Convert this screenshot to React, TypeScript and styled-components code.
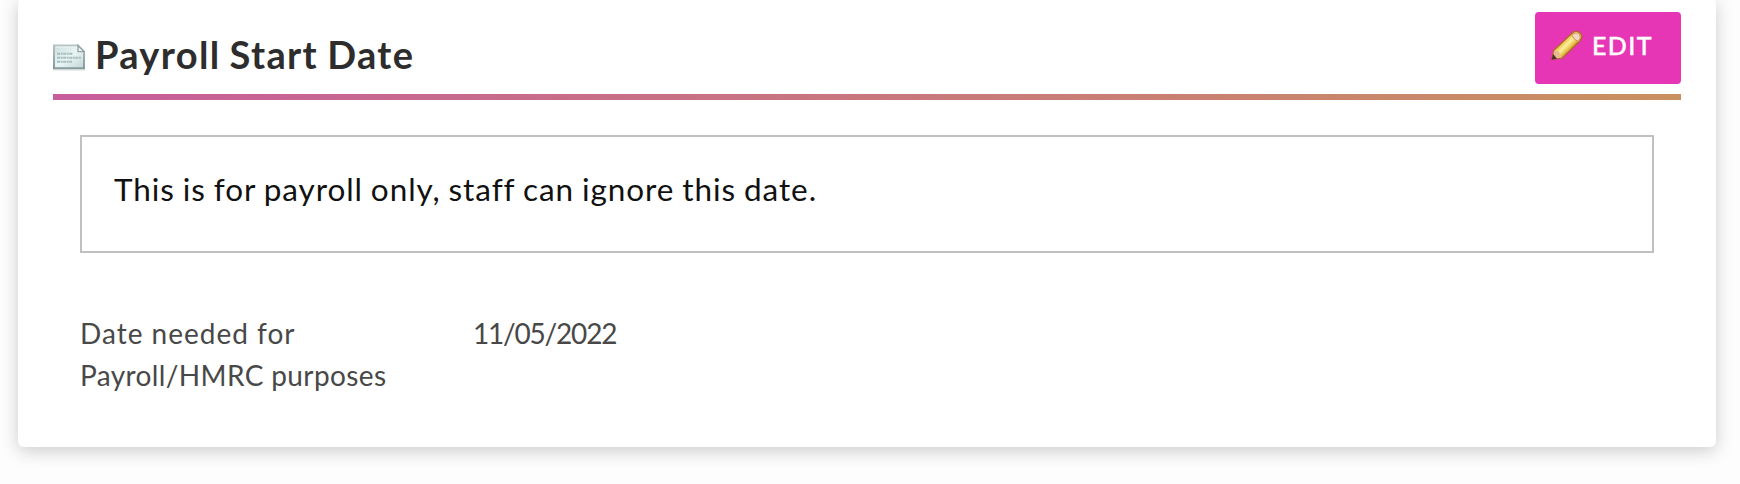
import React from "react";
import styled, { createGlobalStyle } from "styled-components";

const GlobalStyle = createGlobalStyle`
  *, *::before, *::after { box-sizing: border-box; }
  body {
    margin: 0;
    background: #fdfdfd;
    font-family: Lato, "Liberation Sans", sans-serif;
    overflow: hidden;
  }
`;

const Page = styled.main`
  height: 484px;
  padding: 0 24px 37px 18px;
  overflow: hidden;
`;

const Card = styled.section`
  height: 449px;
  margin-top: -2px;
  padding: 14px 35px 0;
  background: #fff;
  border-radius: 6px;
  box-shadow: 0 4px 18px rgba(0, 0, 0, 0.2);
`;

const Header = styled.header`
  display: flex;
  align-items: flex-start;
  justify-content: space-between;
  height: 82px;
`;

const Title = styled.h2`
  display: flex;
  align-items: flex-start;
  gap: 10px;
  margin: 19px 0 0;
  color: #2d2d2d;
  font-size: 38px;
  font-weight: 700;
  line-height: 46px;
  letter-spacing: 1.35px;
  word-spacing: -1.5px;
  white-space: nowrap;
`;

const PaperIcon = styled.svg`
  display: block;
  width: 32px;
  height: 27px;
  margin-top: 13px;
`;

const EditButton = styled.button`
  display: flex;
  align-items: flex-start;
  width: 146px;
  height: 72px;
  padding: 17px 0 0 15px;
  border: 0;
  border-radius: 4px;
  background: #e736b5;
  color: #fff;
  font-family: inherit;
  font-size: 25px;
  font-weight: 500;
  line-height: 32px;
  letter-spacing: 1.4px;
  -webkit-text-stroke: 0.4px #fff;
`;

const PencilIcon = styled.svg`
  display: block;
  width: 34px;
  height: 32px;
  margin: 1px 8px 0 0;
`;

const Rule = styled.div`
  height: 6px;
  background: linear-gradient(90deg, #c75d9c, #c9905f);
`;

const Body = styled.div`
  padding: 35px 27px 0;
`;

const Notice = styled.p`
  height: 118px;
  margin: 0;
  padding: 28px 32px 0;
  border: 2px solid #c0c0c0;
  color: #111;
  font-size: 31.5px;
  line-height: 48px;
  letter-spacing: 0.92px;
  word-spacing: -1px;
`;

const Fields = styled.dl`
  display: grid;
  grid-template-columns: 393px 1fr;
  margin: 59px 0 0;
  color: #484848;
  font-size: 28px;
  line-height: 42px;
`;

const Label = styled.dt``;

const LabelLine = styled.span<{ $tracking: string }>`
  display: block;
  white-space: nowrap;
  letter-spacing: ${(p) => p.$tracking};
`;

const Value = styled.dd`
  margin: 0;
  letter-spacing: -1.2px;
`;

function Paper() {
  return (
    <PaperIcon viewBox="0 0 32 27" aria-hidden="true">
      <defs>
        <linearGradient id="sheet" x1="0" y1="0" x2="1" y2="1">
          <stop offset="0" stopColor="#ccdcdd" />
          <stop offset="0.5" stopColor="#e8f5f5" />
          <stop offset="1" stopColor="#c3d5d6" />
        </linearGradient>
        <linearGradient id="edge" x1="0" y1="0" x2="0" y2="1">
          <stop offset="0" stopColor="#b5c3c3" />
          <stop offset="1" stopColor="#879a9c" />
        </linearGradient>
      </defs>
      <path d="M0 26H32" stroke="#dfe3e3" strokeWidth="1.2" />
      <path d="M1 1.4H25L31 7.6V24.2H1Z" fill="url(#sheet)" stroke="url(#edge)" strokeWidth="2" />
      <path d="M2.6 3H24" stroke="#eef6f6" strokeWidth="1" />
      <path d="M25 1.6V7.6H31Z" fill="#f1f5f5" stroke="#93a4a6" strokeWidth="1.4" />
      <path d="M4 9.8H20M4 13.8H28M4 17.8H19" stroke="#a9bec0" strokeWidth="2" strokeDasharray="3 .6 2 .5" />
    </PaperIcon>
  );
}

function Pencil() {
  return (
    <PencilIcon viewBox="0 0 34 32" aria-hidden="true">
      <defs>
        <linearGradient id="barrel" gradientUnits="userSpaceOnUse" x1="10" y1="10" x2="22" y2="22">
          <stop offset="0" stopColor="#b97a2c" />
          <stop offset="0.25" stopColor="#ecc94e" />
          <stop offset="0.48" stopColor="#fbf0a0" />
          <stop offset="0.72" stopColor="#e8c044" />
          <stop offset="1" stopColor="#a5642a" />
        </linearGradient>
      </defs>
      <path d="M1.8 29.2 4 20 22.2 3Q26.6-.4 30.4 3.2 33.4 6.8 30 10.8L12.2 28.2Z" fill="url(#barrel)" stroke="#b3652f" strokeWidth="1.4" />
      <path d="M4.4 20.4 9 21.4 11.6 27.6 1.8 29.2Z" fill="#e8b98c" />
      <path d="M1.5 29.8 3 23.8 7 28.8Z" fill="#54302a" />
      <path d="M21.8 5.4Q25.6 1.2 29.4 4.2 31.8 7.4 28.4 11.4Q24 10.4 21.8 5.4Z" fill="#f2d6c0" stroke="#cf9055" strokeWidth="1" />
    </PencilIcon>
  );
}

export default function App() {
  return (
    <>
      <GlobalStyle />
      <Page>
        <Card>
          <Header>
            <Title>
              <Paper />
              Payroll Start Date
            </Title>
            <EditButton type="button">
              <Pencil />
              EDIT
            </EditButton>
          </Header>
          <Rule />
          <Body>
            <Notice>This is for payroll only, staff can ignore this date.</Notice>
            <Fields>
              <Label>
                <LabelLine $tracking="1px">Date needed for</LabelLine>
                <LabelLine $tracking="0.38px">Payroll/HMRC purposes</LabelLine>
              </Label>
              <Value>11/05/2022</Value>
            </Fields>
          </Body>
        </Card>
      </Page>
    </>
  );
}
